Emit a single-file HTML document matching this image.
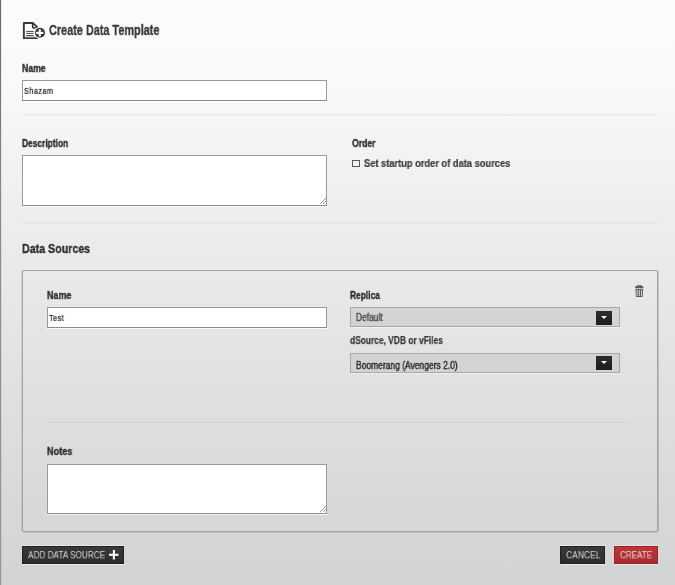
<!DOCTYPE html>
<html><head><meta charset="utf-8">
<style>
html,body{margin:0;padding:0;}
body{width:675px;height:585px;overflow:hidden;position:relative;
 background:linear-gradient(to bottom,#fcfcfc 0%,#f8f8f8 16%,#ebeced 40%,#dddedf 72%,#d2d3d5 100%);
 font-family:"Liberation Sans",sans-serif;}
.lb{position:absolute;left:0;top:0;width:1px;height:585px;background:linear-gradient(#686868 0%,#8a8a8a 35%,#969696 100%);}
.lb2{position:absolute;left:1px;top:0;width:1px;height:585px;background:rgba(0,0,0,.06);}
.t{position:absolute;white-space:nowrap;transform-origin:0 0;will-change:transform;font-weight:bold;color:#2e2e2e;-webkit-text-stroke:0.36px #2e2e2e;}
.box{position:absolute;box-sizing:border-box;}
.inp{background:#fff;border:1px solid #9a9a9a;border-bottom-color:#8a8a8a;box-shadow:0 1px 0 rgba(255,255,255,.8);}
.sep{position:absolute;height:1px;background:#e4e4e4;}
.sel{background:#d3d3d3;border:1px solid #a8a8a8;box-shadow:0 1px 0 rgba(255,255,255,.5);}
.dd{position:absolute;width:16px;height:14px;background:linear-gradient(#2c2c2c,#1e1e1e);}
.dd:after{content:"";position:absolute;left:4.5px;top:5.3px;border-left:3.6px solid transparent;border-right:3.6px solid transparent;border-top:3.6px solid #f4f4f4;}
.btn{position:absolute;box-sizing:border-box;height:18px;top:546px;box-shadow:0 1px 0 rgba(255,255,255,.55),0 -1px 0 rgba(255,255,255,.4);}
.bt{position:absolute;white-space:nowrap;transform-origin:0 0;will-change:transform;color:#d6d6d6;font-weight:normal;}
</style></head>
<body>
<div class="lb"></div><div class="lb2"></div>

<!-- header icon -->
<svg style="position:absolute;left:0;top:0" width="50" height="45" viewBox="0 0 50 45">
 <path d="M23.85 23.05 H33 L37.15 27.2 V38.15 H23.85 Z" fill="#fff" stroke="#383838" stroke-width="1.9" stroke-linejoin="round"/>
 <path d="M33.3 24.8 V27.3 H36" fill="#d0d0d0" stroke="none"/>
 <path d="M32.6 24 V27 Q32.6 27.9 33.5 27.9 H37" fill="none" stroke="#333" stroke-width="1.5"/>
 <rect x="26.2" y="30.9" width="7.5" height="1" fill="#444"/>
 <rect x="26.2" y="32.9" width="7.5" height="1" fill="#444"/>
 <rect x="26.2" y="35.1" width="7.5" height="1" fill="#444"/>
 <rect x="25" y="36.3" width="11" height="0.9" fill="#bbb"/>
 <circle cx="40" cy="32.8" r="6" fill="#fff"/>
 <circle cx="40" cy="32.8" r="5.05" fill="#363636"/>
 <rect x="38.7" y="29.2" width="2.1" height="7.3" fill="#fff"/>
 <rect x="36.1" y="31.85" width="7.3" height="2.1" fill="#fff"/>
</svg>
<div class="t" style="left:48.7px;top:22.9px;font-size:14.5px;line-height:14.5px;transform:scaleX(0.75);color:#383838;-webkit-text-stroke:0.35px #383838">Create Data Template</div>

<div class="t" style="left:22px;top:63.5px;font-size:10.3px;line-height:10.3px;transform:scaleX(0.84)">Name</div>
<div class="box inp" style="left:22px;top:80px;width:305px;height:21px;"></div>
<div class="t" style="left:23.6px;top:86.6px;font-size:8px;line-height:8px;font-weight:normal;color:#141414;-webkit-text-stroke:0.2px #141414;letter-spacing:0.55px;transform:scale(0.9,1.1)">Shazam</div>

<div class="sep" style="left:22px;top:114px;width:636px;height:2px;background:linear-gradient(#efefef,#e9e9e9)"></div>

<div class="t" style="left:22.1px;top:138.2px;font-size:10.5px;line-height:10.5px;transform:scaleX(0.8)">Description</div>
<div class="box inp" style="left:22px;top:155px;width:305px;height:51px;"></div>
<svg style="position:absolute;left:318px;top:196px" width="9" height="9" viewBox="0 0 9 9"><path d="M2 8 L8 2 M5 8 L8 5" stroke="#8a8a8a" stroke-width="0.9"/></svg>

<div class="t" style="left:352.3px;top:137.8px;font-size:10.5px;line-height:10.5px;transform:scaleX(0.82)">Order</div>
<div class="box" style="left:352px;top:160px;width:8px;height:7px;border:1px solid #5a5a5a;"></div>
<div class="t" style="left:364px;top:159.2px;font-size:10px;line-height:10px;transform:scaleX(0.93);color:#3c3c3c;-webkit-text-stroke:0.2px #3c3c3c">Set startup order of data sources</div>

<div class="sep" style="left:22px;top:222px;width:636px;height:2px;background:linear-gradient(#e8e8e8,#e3e3e3)"></div>

<div class="t" style="left:21.8px;top:241.8px;font-size:13px;line-height:13px;transform:scaleX(0.82)">Data Sources</div>

<div class="box" style="left:22px;top:270px;width:636px;height:262px;border:1px solid #a4a4a4;border-radius:2px;box-shadow:-1px 0 0 rgba(0,0,0,.09),1px 0 0 rgba(0,0,0,.16),0 1px 0 rgba(0,0,0,.1);"></div>

<!-- trash -->
<svg style="position:absolute;left:634px;top:284px" width="11" height="14" viewBox="634 284 11 14">
 <path d="M635 288.3 C635 286.4 636.4 285.7 637.5 285.5 C637.9 285.0 638.5 284.9 639.3 284.9 C640.1 284.9 640.7 285.0 641.1 285.5 C642.2 285.7 643.6 286.4 643.6 288.3 Z" fill="#5a5a5a"/>
 <ellipse cx="639.3" cy="285.9" rx="0.9" ry="0.45" fill="#b8b8b8"/>
 <path d="M635.5 288.9 H643.1 L642.8 296.2 Q642.7 297 641.9 297 H636.7 Q635.9 297 635.8 296.2 Z" fill="#5a5a5a"/>
 <rect x="636.6" y="289.8" width="1.1" height="6.2" fill="#d4d4d4"/>
 <rect x="638.8" y="289.8" width="1.1" height="6.2" fill="#d4d4d4"/>
 <rect x="641" y="289.8" width="1.0" height="6.2" fill="#d4d4d4"/>
</svg>

<div class="t" style="left:47px;top:289.7px;font-size:10.5px;line-height:10.5px;transform:scaleX(0.85)">Name</div>
<div class="box inp" style="left:47px;top:307px;width:280px;height:21px;"></div>
<div class="t" style="left:48.6px;top:313.8px;font-size:8px;line-height:8px;font-weight:normal;color:#141414;-webkit-text-stroke:0.2px #141414;letter-spacing:0.55px;transform:scale(0.9,1.1)">Test</div>

<div class="t" style="left:350px;top:289.7px;font-size:10.5px;line-height:10.5px;transform:scaleX(0.8)">Replica</div>
<div class="box sel" style="left:350px;top:307px;width:270px;height:20px;"></div>
<div class="t" style="left:355.5px;top:312.8px;font-size:10px;line-height:10px;font-weight:normal;color:#505050;transform:scaleX(0.84);-webkit-text-stroke:0.45px #505050">Default</div>
<div class="dd" style="left:596px;top:311px;"></div>

<div class="t" style="left:350px;top:334.6px;font-size:10.5px;line-height:10.5px;transform:scaleX(0.80);color:#3a3a3a;-webkit-text-stroke:0.25px #3a3a3a">dSource, VDB or vFiles</div>
<div class="box sel" style="left:350px;top:353px;width:270px;height:20px;"></div>
<div class="t" style="left:355.5px;top:361px;font-size:10px;line-height:10px;font-weight:normal;color:#2a2a2a;transform:scaleX(0.848);-webkit-text-stroke:0.4px #2a2a2a">Boomerang (Avengers 2.0)</div>
<div class="dd" style="left:596px;top:356px;"></div>

<div class="sep" style="left:47px;top:422px;width:582px;background:#d4d5d5"></div>

<div class="t" style="left:47px;top:446px;font-size:10.5px;line-height:10.5px;transform:scaleX(0.87)">Notes</div>
<div class="box inp" style="left:47px;top:464px;width:280px;height:50px;"></div>
<svg style="position:absolute;left:318px;top:504px" width="9" height="9" viewBox="0 0 9 9"><path d="M2 8 L8 2 M5 8 L8 5" stroke="#8a8a8a" stroke-width="0.9"/></svg>

<!-- buttons -->
<div class="btn" style="left:22px;width:102px;background:linear-gradient(#38393a,#2b2c2d);border:1px solid #222;"></div>
<div class="bt" style="left:27.5px;top:551px;font-size:10px;line-height:10px;transform:scale(0.82,0.92)">ADD DATA SOURCE</div>
<svg style="position:absolute;left:109px;top:550px" width="10" height="10" viewBox="0 0 10 10"><rect x="3.8" y="0" width="2.2" height="9.5" fill="#f0f0f0"/><rect x="0" y="3.7" width="9.5" height="2.2" fill="#f0f0f0"/></svg>

<div class="btn" style="left:560px;width:45px;background:linear-gradient(#38393a,#2b2c2d);border:1px solid #222;"></div>
<div class="bt" style="left:566px;top:551px;font-size:10px;line-height:10px;transform:scale(0.85,0.92)">CANCEL</div>
<div class="btn" style="left:614px;width:44px;background:linear-gradient(#bd383c,#a72a2e);border:1px solid #a31d21;"></div>
<div class="bt" style="left:619.5px;top:551px;font-size:10px;line-height:10px;transform:scale(0.805,0.92);color:#ecd0d0">CREATE</div>
</body></html>
